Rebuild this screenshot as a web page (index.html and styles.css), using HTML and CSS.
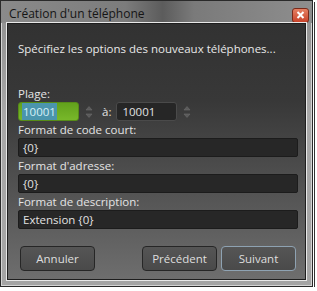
FILE: index.html
```html
<!DOCTYPE html>
<html>
<head>
  <meta charset="UTF-8">
  <title>Création d'un téléphone</title>
  <link rel="stylesheet" href="styles.css">
</head>
<body>
  <div class="window">
    <div class="titlebar">
      <span class="title">Création d'un téléphone</span>
      <span class="close">
        <svg width="9" height="8" viewBox="0 0 9 8"><path d="M1.5 1 L7.5 7 M7.5 1 L1.5 7" stroke="#fff" stroke-width="2"/></svg>
      </span>
    </div>
    <div class="content">
      <p class="intro">Spécifiez les options des nouveaux téléphones...</p>
      <div class="field first">
        <label>Plage:</label>
        <div class="range">
          <div class="num green"><span class="sel">10001</span></div>
          <svg class="spin" width="8" height="14" viewBox="0 0 8 14"><path d="M1 5 L4 1.5 L7 5 Z M1 9 L4 12.5 L7 9 Z" fill="#5a5a5a" stroke="#6c6c6c" stroke-width="0.6"/></svg>
          <span class="to">à:</span>
          <div class="num">10001</div>
          <svg class="spin" width="8" height="14" viewBox="0 0 8 14"><path d="M1 5 L4 1.5 L7 5 Z M1 9 L4 12.5 L7 9 Z" fill="#5a5a5a" stroke="#6c6c6c" stroke-width="0.6"/></svg>
        </div>
      </div>
      <div class="field">
        <label>Format de code court:</label>
        <div class="text">{0}</div>
      </div>
      <div class="field">
        <label>Format d'adresse:</label>
        <div class="text">{0}</div>
      </div>
      <div class="field">
        <label>Format de description:</label>
        <div class="text">Extension {0}</div>
      </div>
      <div class="buttons">
        <button>Annuler</button>
        <div class="nav">
          <button>Précédent</button>
          <button class="default">Suivant</button>
        </div>
      </div>
    </div>
  </div>
</body>
</html>
```

FILE: styles.css
```css
body {
  margin: 0;
  padding: 0;
  background: #fff;
  font-family: 'Open Sans', 'Noto Sans', sans-serif;
  font-size: 11.5px;
}
.window {
  width: 313px;
  height: 287px;
  border: 1px solid #2a2a2a;
  background: linear-gradient(#8e8e8e, #a8a8a8 40%, #a4a4a4);
  box-shadow: inset 0 0 0 1px #d4d4d4, 1px 1px 0 #fff, 2px 2px 0 #333;
  display: flex;
  flex-direction: column;
  padding: 0 6px 6px 6px;
  box-sizing: border-box;
}
.titlebar {
  height: 22px;
  display: flex;
  align-items: center;
  justify-content: space-between;
  margin: 0 -6px 0 -6px;
  padding: 0 3px 0 8px;
  background: linear-gradient(90deg, #8a8a8a 0%, #7c7c7c 40%, #5c5c5c 52%, #7a7a7a 62%, #8e8e8e 100%);
}
.title {
  color: #151515;
  font-size: 12px;
  padding-top: 2px;
}
.close {
  width: 15px;
  height: 13px;
  margin-top: 6px;
  background: linear-gradient(#e58063, #c9432a);
  border: 1px solid #7a2a1a;
  border-radius: 3px;
  display: flex;
  align-items: center;
  justify-content: center;
}
.content {
  flex: 1;
  border: 1px solid #1e1e1e;
  box-shadow: 0 0 0 1px #e8e8e8;
  background: linear-gradient(#323232 0%, #383838 30%, #585858 72%, #6e6e6e 100%);
  padding: 0 7px 0 10px;
  display: flex;
  flex-direction: column;
  color: #e2e2e2;
}
.intro {
  margin: 17px 0 0;
  color: #e8e8e8;
}
.field {
  display: flex;
  flex-direction: column;
}
.field.first {
  margin-top: 30px;
}
label {
  height: 16px;
  line-height: 16px;
  color: #e4e4e4;
}
.range {
  display: flex;
  align-items: center;
  height: 19px;
  margin-bottom: 1px;
}
.num {
  height: 17px;
  border: 1px solid #4a4a4a;
  border-radius: 3px;
  background: #262626;
  line-height: 17px;
  padding-left: 5px;
  width: 54px;
}
.num.green {
  border-color: #578c18;
  background: linear-gradient(#62a11c, #78b82a);
  padding-left: 3px;
  width: 56px;
}
.sel {
  background: #4b95ad;
  color: #d6f0f8;
  padding: 1px 1px;
}
.spin {
  margin: 0 9px 0 6px;
}
.to {
  margin-right: 5px;
}
.text {
  height: 17px;
  line-height: 17px;
  border: 1px solid #1c1c1c;
  border-radius: 2px;
  background: #272727;
  padding-left: 4px;
  margin-bottom: 1px;
}
.buttons {
  display: flex;
  justify-content: space-between;
  margin-top: auto;
  margin-bottom: 8px;
  padding: 0 2px;
}
.nav {
  display: flex;
  gap: 4px;
}
button {
  width: 75px;
  height: 25px;
  font-family: 'Open Sans', 'Noto Sans', sans-serif;
  font-size: 11.5px;
  color: #dedede;
  background: linear-gradient(#555, #4a4a4a);
  border: 1px solid #262626;
  border-radius: 4px;
  padding: 0;
}
button.default {
  border-color: #8ea2b2;
}
```
